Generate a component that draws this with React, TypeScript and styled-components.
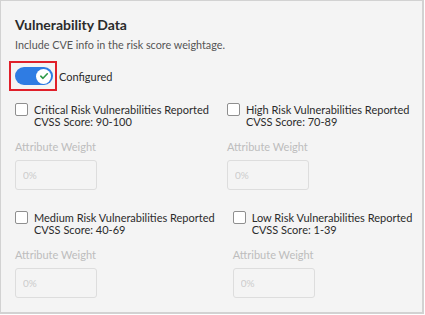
import React, { useState } from "react";
import styled, { createGlobalStyle } from "styled-components";

const GlobalStyle = createGlobalStyle`
  html, body {
    margin: 0;
    padding: 0;
    background: #ffffff;
  }
  * {
    box-sizing: border-box;
  }
`;

const Panel = styled.div`
  width: 424px;
  height: 314px;
  background: #f4f4f4;
  border: 1px solid #d2d2d2;
  border-right-width: 2px;
  border-bottom-width: 2px;
  padding: 14px 14px;
  font-family: Lato, "Liberation Sans", sans-serif;
  color: #333333;
`;

const Title = styled.h2`
  margin: 0;
  font-size: 14px;
  line-height: 20px;
  font-weight: 700;
  color: #2b2b2b;
`;

const Subtitle = styled.p`
  margin: 3px 0 0;
  font-size: 10.8px;
  line-height: 14px;
  color: #555555;
`;

const ToggleRow = styled.div`
  display: flex;
  align-items: center;
  margin-top: 9px;
`;

const Highlight = styled.div`
  margin-left: -6px;
  border: 2px solid #e0202a;
  padding: 4px 2px 4px 4px;
  display: flex;
`;

const Track = styled.button<{ $on: boolean }>`
  width: 38px;
  height: 18px;
  border-radius: 9px;
  border: none;
  background: ${(p) => (p.$on ? "#2f7ce3" : "#bdbdbd")};
  display: flex;
  align-items: center;
  justify-content: ${(p) => (p.$on ? "flex-end" : "flex-start")};
  padding: 0 2px;
  cursor: pointer;
`;

const Knob = styled.span`
  width: 15px;
  height: 15px;
  border-radius: 50%;
  background: #ffffff;
  display: flex;
  align-items: center;
  justify-content: center;
`;

const ToggleLabel = styled.span`
  margin-left: 2px;
  font-size: 11px;
  color: #2b2b2b;
`;

const Items = styled.div`
  margin-top: 12px;
  display: flex;
  flex-direction: column;
  gap: 21px;
`;

const Row = styled.div`
  display: flex;
  gap: 18px;
`;

const Item = styled.div`
  display: flex;
  flex-direction: column;
`;

const CheckLine = styled.label`
  display: flex;
  align-items: flex-start;
  gap: 6px;
  cursor: pointer;
`;

const Box = styled.span`
  width: 13px;
  height: 13px;
  border: 1px solid #8f8f8f;
  border-radius: 2px;
  background: #ffffff;
  flex-shrink: 0;
`;

const CheckText = styled.div`
  font-size: 11px;
  line-height: 12px;
  color: #2b2b2b;
  padding-top: 1px;
  white-space: nowrap;
`;

const FieldLabel = styled.div`
  margin-top: 12px;
  font-size: 11px;
  line-height: 14px;
  color: #bdbdbd;
`;

const WeightInput = styled.input`
  margin-top: 6px;
  width: 82px;
  height: 30px;
  border: 1px solid #dddddd;
  border-radius: 3px;
  background: #f4f4f4;
  padding: 0 7px;
  font-family: Lato, "Liberation Sans", sans-serif;
  font-size: 10px;
  color: #cccccc;
  &::placeholder {
    color: #cccccc;
  }
`;

const rows = [
  [
    { name: "Critical Risk Vulnerabilities Reported", score: "90-100" },
    { name: "High Risk Vulnerabilities Reported", score: "70-89" },
  ],
  [
    { name: "Medium Risk Vulnerabilities Reported", score: "40-69" },
    { name: "Low Risk Vulnerabilities Reported", score: "1-39" },
  ],
];

function App() {
  const [on, setOn] = useState(true);
  return (
    <>
      <GlobalStyle />
      <Panel>
        <Title>Vulnerability Data</Title>
        <Subtitle>Include CVE info in the risk score weightage.</Subtitle>
        <ToggleRow>
          <Highlight>
            <Track $on={on} onClick={() => setOn((v) => !v)}>
              <Knob>
                {on ? (
                  <svg width="10" height="10" viewBox="0 0 10 10">
                    <path
                      d="M1.8 5.2 L4 7.3 L8.3 2.8"
                      fill="none"
                      stroke="#2e9a48"
                      strokeWidth="1.6"
                      strokeLinecap="round"
                      strokeLinejoin="round"
                    />
                  </svg>
                ) : null}
              </Knob>
            </Track>
          </Highlight>
          <ToggleLabel>Configured</ToggleLabel>
        </ToggleRow>
        <Items>
          {rows.map((row, i) => (
            <Row key={i}>
              {row.map((item) => (
                <Item key={item.name}>
                  <CheckLine>
                    <Box />
                    <CheckText>
                      {item.name}
                      <br />
                      CVSS Score: {item.score}
                    </CheckText>
                  </CheckLine>
                  <FieldLabel>Attribute Weight</FieldLabel>
                  <WeightInput placeholder="0%" disabled />
                </Item>
              ))}
            </Row>
          ))}
        </Items>
      </Panel>
    </>
  );
}

export default App;
